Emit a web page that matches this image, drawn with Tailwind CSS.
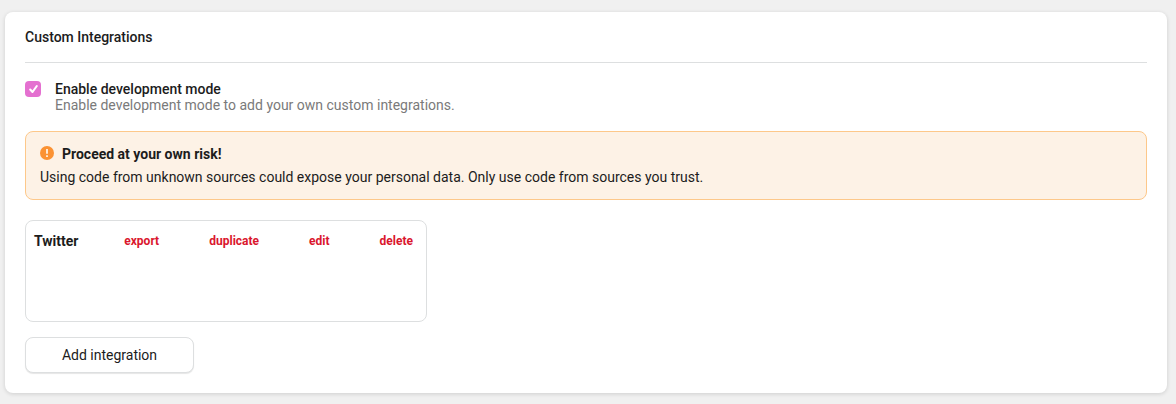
<!DOCTYPE html>
<html lang="en"><head><meta charset="utf-8"><title>Custom Integrations</title>
<script src="https://cdn.jsdelivr.net/npm/@tailwindcss/browser@4"></script></head>
<body class="h-screen overflow-hidden bg-[#f0f0f0] pt-3 pl-[5px] pr-[9px] font-[Roboto,sans-serif] text-sm text-[#1c1c1c]">
<main class="h-[381px] rounded-lg bg-white px-5 shadow-[0_1px_4px_rgba(0,0,0,0.14)]">
<h1 class="h-[51px] border-b border-[#dddfe0] pt-[15px] text-[14px] leading-5 font-medium">Custom Integrations</h1>
<label class="flex gap-[14px] pt-[18px]">
<span class="flex size-4 items-center justify-center rounded-[4px] bg-[#e470d0]"><svg class="size-4" viewBox="0 0 16 16" fill="none" stroke="white" stroke-width="2.1" stroke-linecap="round" stroke-linejoin="round"><path d="M5.2 8.6 7.5 11l4.3-6"/></svg></span>
<span class="leading-4"><span class="block font-medium">Enable development mode</span><span class="block text-[#7a7a7a]">Enable development mode to add your own custom integrations.</span></span>
</label>
<section class="mt-[18px] h-[69px] rounded-lg border border-[#fdc88a] bg-[#fdf2e6] px-[14px] pt-[12px]">
<h2 class="flex gap-2 leading-5 font-bold"><svg class="mt-[2px] size-[14px]" viewBox="0 0 14 14"><circle cx="7" cy="7" r="7" fill="#fb9233"/><path d="M7 3v4.7M7 9.2v1.7" stroke="#fdf2e6" stroke-width="1.8"/></svg>Proceed at your own risk!</h2>
<p class="mt-[3px] leading-5">Using code from unknown sources could expose your personal data. Only use code from sources you trust.</p>
</section>
<section class="mt-5 flex h-[102px] w-[402px] items-start justify-between rounded-lg border border-[#dddfe0] pt-[10px] pr-[13px] pl-2 leading-5">
<h3 class="font-bold">Twitter</h3>
<nav class="flex gap-[50px] text-xs leading-5 font-bold text-[#da162d]"><a class="-mr-px w-9">export</a><a>duplicate</a><a>edit</a><a>delete</a></nav>
</section>
<button class="mt-[15px] h-9 w-[169px] rounded-lg border border-[#dddfe0] bg-white shadow-[0_1px_1px_rgba(0,0,0,0.1)]">Add integration</button>
</main></body></html>
